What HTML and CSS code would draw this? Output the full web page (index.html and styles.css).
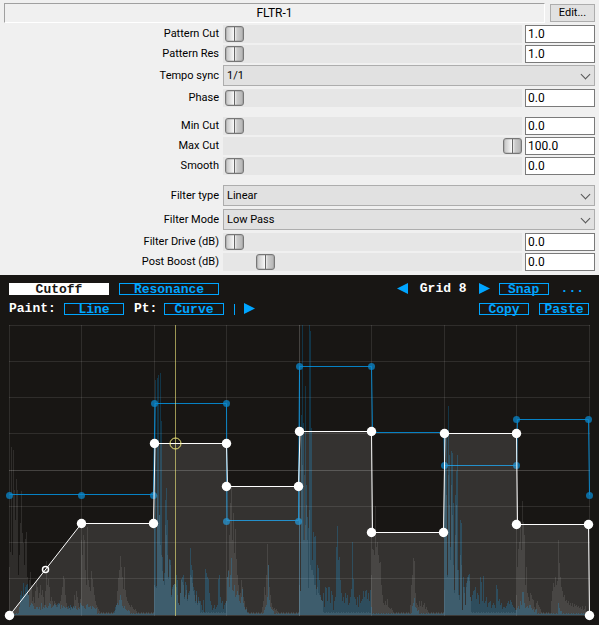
FILE: index.html
```
<!DOCTYPE html>
<html lang="en">
<head>
<meta charset="utf-8">
<title>FLTR-1</title>
<link rel="stylesheet" href="styles.css">
</head>
<body>
<form class="params">
  <header class="head">
    <h1 class="title">FLTR-1</h1>
    <button type="button" class="edit">Edit...</button>
  </header>
  <section class="group">
    <div class="row"><label for="pc">Pattern Cut</label><input id="pc" type="range" value="0"><input class="num" type="text" value="1.0" aria-label="Pattern Cut value"></div>
    <div class="row"><label for="pr">Pattern Res</label><input id="pr" type="range" value="0"><input class="num" type="text" value="1.0" aria-label="Pattern Res value"></div>
    <div class="row pick"><label for="ts">Tempo sync</label><select id="ts"><option>1/1</option></select></div>
    <div class="row"><label for="ph">Phase</label><input id="ph" type="range" value="0"><input class="num" type="text" value="0.0" aria-label="Phase value"></div>
  </section>
  <section class="group">
    <div class="row"><label for="mi">Min Cut</label><input id="mi" type="range" value="0"><input class="num" type="text" value="0.0" aria-label="Min Cut value"></div>
    <div class="row"><label for="ma">Max Cut</label><input id="ma" type="range" value="100"><input class="num" type="text" value="100.0" aria-label="Max Cut value"></div>
    <div class="row"><label for="sm">Smooth</label><input id="sm" type="range" value="0"><input class="num" type="text" value="0.0" aria-label="Smooth value"></div>
  </section>
  <section class="group">
    <div class="row pick"><label for="ft">Filter type</label><select id="ft"><option>Linear</option></select></div>
    <div class="row pick"><label for="fm">Filter Mode</label><select id="fm"><option>Low Pass</option></select></div>
    <div class="row"><label for="fd">Filter Drive (dB)</label><input id="fd" type="range" value="0"><input class="num" type="text" value="0.0" aria-label="Filter Drive value"></div>
    <div class="row"><label for="pb">Post Boost (dB)</label><input id="pb" type="range" value="11"><input class="num" type="text" value="0.0" aria-label="Post Boost value"></div>
  </section>
</form>
<main class="editor">
  <div class="bar">
    <div class="side tabs">
      <button class="key wide on">Cutoff</button>
      <button class="key wide">Resonance</button>
    </div>
    <div class="side grid-tools">
      <button class="arrow" aria-label="Previous grid"><svg width="11" height="12" viewBox="0 0 11 12"><path d="M11 0V11L0 5.500Z"/></svg></button>
      <span>Grid 8</span>
      <button class="arrow" aria-label="Next grid"><svg width="11" height="12" viewBox="0 0 11 12"><path d="M0 0V11L11 5.500Z"/></svg></button>
      <button class="key small">Snap</button>
      <button class="dots">...</button>
    </div>
  </div>
  <div class="bar">
    <div class="side">
      <span class="name">Paint:</span><button class="key mid">Line</button>
      <span class="name pt">Pt:</span><button class="key mid">Curve</button>
      <i class="rule"></i>
      <button class="arrow" aria-label="Play"><svg width="11" height="12" viewBox="0 0 11 12"><path d="M0 0V11L11 5.500Z"/></svg></button>
    </div>
    <div class="side tabs">
      <button class="key small">Copy</button>
      <button class="key small">Paste</button>
    </div>
  </div>
  <svg class="chart" viewBox="9 325 581 291" role="img" aria-label="Cutoff pattern">
    <path class="grid" d="M9 325.5H590M9 361.5H590M9 397.5H590M9 433.5H590M9 470.5H590M9 506.5H590M9 542.5H590M9 578.5H590M9 615.5H590M9.500 325V616M81.500 325V616M154.500 325V616M226.500 325V616M299.500 325V616M371.500 325V616M444.500 325V616M516.500 325V616M589.500 325V616"/>
    <path class="grid" d="M9 470.5H590M299.500 325V616"/>
    <path id="input" class="wave-in"/>
    <path id="output" class="wave-out"/>
    <g class="res">
      <path d="M9.500 494.5H153.500L155 403.500H226.500L227 520.500H295.500H298.500L299.500 366.500H371.500L372.500 432.500H444L444.500 465.500H516.500L517.500 419.500H588.500L589.500 495"/>
      <g id="resDots"></g>
    </g>
    <path class="fill" d="M9 615.500L81.500 523.500H153.500L154.500 443.500H226.500V486.500H298.500L299.500 431.500H371.500L372.500 532.500H443.500L444.500 433.500H516.500L517.500 524.500H588.500L589.500 615.500Z"/>
    <path class="playhead" d="M175.500 325V616"/>
    <path class="cut" d="M9.500 615.500L81.500 523.500H153.500L155 443.500H226.500L227.500 486.500H298.500L300 431.500H371.500L372.500 532.500H443.500L445 433.500H516.500L517.500 524.500H588.500L589.500 615.500"/>
    <g id="cutDots" class="cut-dots"></g>
    <circle class="handle" cx="45.500" cy="569.500" r="3" stroke-width="1.500"/>
    <circle class="cursor" cx="175.500" cy="443.500" r="5.500"/>
  </svg>
</main>
<script src="chart.js"></script>
</body>
</html>
```
FILE: styles.css
```
* { box-sizing: border-box; }
body {
  margin: 0;
  background: #f0f0f0;
  color: #000;
  font: 12px/16px Roboto, sans-serif;
}
button, input, select { font: inherit; color: inherit; margin: 0; border-radius: 0; }

.params { padding: 3px 4px 4px; }
.head { display: flex; gap: 5px; align-items: center; }
.title {
  flex: 1;
  height: 20px;
  margin: 0;
  border: 1px solid;
  border-color: #a0a0a0 #fff #fff #a0a0a0;
  font: inherit;
  line-height: 18px;
  text-align: center;
}
.edit {
  width: 45px;
  height: 18px;
  padding: 0;
  border: 1px solid #adadad;
  background: #e1e1e1;
  font-size: 11px;
}
.group { display: grid; gap: 2px; padding-top: 2px; }
.group + .group { padding-top: 10px; }
.row {
  display: grid;
  grid-template-columns: 215px minmax(0, 1fr) 70px;
  align-items: center;
  height: 18px;
}
.row label { font-size: 11px; text-align: right; }
.pick {
  position: relative;
  grid-template-columns: 215px minmax(0, 1fr);
  height: 22px;
  align-items: start;
}
.pick label { line-height: 22px; }
.num {
  width: 70px;
  height: 18px;
  padding: 0 2px;
  border: 1px solid #7a7a7a;
  background: #fff;
}
select {
  appearance: none;
  height: 21px;
  margin-left: 4px;
  padding: 0 3px;
  border: 1px solid #adadad;
  background: #e1e1e1;
  font-size: 11px;
}
.pick::after {
  content: "";
  position: absolute;
  right: 6px;
  top: 6px;
  width: 6px;
  height: 6px;
  border: solid #555;
  border-width: 0 1px 1px 0;
  transform: rotate(45deg);
  pointer-events: none;
}
input[type="range"] {
  appearance: none;
  height: 18px;
  margin: 0 3px 0 4px;
  padding: 0 0 0 2px;
  background: #e6e6e6;
}
input[type="range"]::-webkit-slider-thumb {
  appearance: none;
  width: 19px;
  height: 16px;
  border: 1px solid #777;
  border-radius: 3px;
  background: linear-gradient(90deg, #c4c4c4, #f2f2f2 7px, #fff 8px, #666 8px 9px, #eee 9px, #ccc 11px, #b4b4b4);
  box-shadow: inset 0 0 0 1px rgba(120, 120, 120, .25);
}

.editor {
  display: grid;
  gap: 8px;
  padding: 8px 9px 9px;
  background: #181614;
  color: #fff;
  font: bold 13px/12px "Liberation Mono", monospace;
}
.bar { display: flex; justify-content: space-between; height: 12px; padding-right: 1px; }
.bar + .chart { margin-top: 2px; }
.side { display: flex; align-items: center; }
.tabs { gap: 10px; }
.key {
  height: 12px;
  padding: 2px 0 0;
  border: 1px solid #00a5ff;
  background: none;
  color: #00a5ff;
  line-height: 8px;
}
.wide { width: 100px; }
.mid { width: 60px; }
.small { width: 50px; }
.on { border-color: #fff; background: #fff; color: #181614; }
.arrow { display: flex; padding: 0; border: 0; background: none; }
.arrow path { fill: #00a5ff; }
.grid-tools { gap: 12px; }
.grid-tools .small { margin-left: -3px; }
.dots { padding: 0 5px 0 0; border: 0; background: none; color: #00a5ff; line-height: 12px; }
.name { width: 55px; }
.pt { width: 30px; margin-left: 10px; }
.rule { width: 1px; height: 11px; margin: 0 9px 0 10px; background: #00a5ff; }

.chart { display: block; width: 100%; overflow: visible; }
.grid { fill: none; stroke: #fff; stroke-opacity: .1; }
.wave-in { fill: #fff; fill-opacity: .1; shape-rendering: crispEdges; }
.wave-out { fill: #00a5ff; fill-opacity: .22; shape-rendering: crispEdges; }
.fill { fill: #fff; fill-opacity: .12; }
.res path { fill: none; stroke: #00a5ff; stroke-opacity: .75; }
.res circle { fill: #0a87cc; fill-opacity: .75; }
.playhead { stroke: #f5ec7d; stroke-opacity: .6; }
.cut { fill: none; stroke: #fff; }
.cut-dots circle { fill: #fff; }
.handle { fill: none; stroke: #fff; }
.cursor { fill: none; stroke: #f5ec7d; }
```
FILE: chart.js
```
// Bar heights by start column; unlisted columns hold the quiet tail.
const input = {
  9: "48 63 168 60 165 125 95 136 125 40 60 92 124 82 72 50 76 83 38 20 35 43 30 14 18 12 24 35 28 17 22 30 20 25 18 10 24 54 30 36 28 14 18 14 10 14 12 10 8 10 12 14 20 28 39 36 20 12 8 6 7 5 8 6 8 20 15 24 18 12 8 16 75 60 80 75 45 30 88 35 28 24 44 36 28 20 14 10 8 6 4",
  115: "5 10 24 37 45 59 48 38 26 48 25 18 14 12 10 8 10 8 6 5 6 4",
  154: "30 28 27 120 90 100 70 60 44 34 30 90 80 60 36 55 50 18 26 30 31 30 28 20 12 10 22 35 33 30 16 20 25 14 20 20 40 38 32 24 20 12 20 10 14 12",
  226: "14 38 45 80 112 130 75 102 62 86 56 40 30 20 22 35 28 18 14 6 8",
  262: "8 14 28 20 40 71 50 28 20 12 8 6 7 5 6 4",
  299: "30 24 180 150 75 140 90 110 75 27 105 50 45 45 40 30 30 20 28 22 20 18 15 14",
  371: "40 66 65 60 109 68 73 60 52 53 30 20 12 10 14 10 16 8 7 6 7 5",
  410: "10 30 40 57 54 22 12 10 8 14 9 14 8 10 12 6 8 5",
  444: "25 150 120 38 140 110 55 130 100 50 22 80 110 45 20 15 60 50 5 28 22 10 28 34 38 34 18",
  516: "20 48 66 73 90 65 114 93 80 30 48 22 18 14 22 20 16 15 8 6 12 14 10 8 6",
  551: "14 24 32 28 38 30 34 75 52 38 28 24 18 20 14 15 12 14 10 12 9 12 8 11 9 10 8 9 7 8 6 9 5 6 9 4"
};
const output = {
  19: "8 20 24 19 32 21 28 30 31 20 8 10 12 11 9 6 6 8 8 6 8 5 12 6 8 7 10 8 7 9 12 11 7 8 9 11 10 8 11 12 11 6 10 7 9 8 7 8 6 9 7 10 8 7 9 7 9 6 5 7 6 12 10 9 9 7 6 10 11 8 8 9 6 9 8 7 6 7",
  114: "4 8 10 12 10 15 20 15 9 7 9 6 5 4 5 4",
  154: "95 235 29 237 240 100 242 194 58 34 42 115 127 95 38 56 55 20 28 30 31 31 40 35 12 10 22 36 38 40 18 33 30 16 22 24 67 50 45 28 25 14 24 12 18 14 14 10 5 15 3 46 42 38 36 22 14 10 5 7 10 6 8 10 36 40 18 12 14 6 10 12 14 38 44 28 40 57 25 24 30 18 20 24 20 14 12 18 26 12 8 5 6 3",
  264: "5 8 10 18 50 15 8 6 5 4",
  299: "240 24 200 290 192 75 229 130 98 87 290 284 187 55 83 78 79 26 50 47 35 20 15 14 22 8 28 27 14 28 28 12 24 20 5 14 18 68 89 55 58 35 22 14 18 12 22 17 20 10 12 18 26 73 36 18 16 10 18 8 20 12 14 16 24 18 24 25 16 22 14 25 8",
  412: "9 12 17 8 7 4 5",
  444: "182 150 182 40 209 160 68 164 162 112 25 120 144 160 45 20 95 92 5 38 28 10 32 38 40 41 18 14 20 24 25 28 16 22 20 11 38 33 14 39 12 14 18 8 12 13 14 7 10 12 10 7 30 26 14 16 10 12 6 8 8 7 9 12 14 11 15 13 10 8 7 5 7",
  516: "5 7 9 6 14 10 23 23 12 7 8 9 7 10 10 7 5 6 3 5 6",
  558: "12 7 4 4"
};
function wave(runs, quiet) {
  const h = Array.from({ length: 580 }, (_, i) => quiet + (i * 7 % 5 > 2 ? 1 : 0));
  for (const [start, run] of Object.entries(runs))
    run.split(" ").forEach((v, i) => { if (+start - 9 + i < 580) h[+start - 9 + i] = +v; });
  return "M9 615" + h.map((v, i) => `V${615 - v}H${10 + i}`).join("") + "V615Z";
}
function dots(id, r, points) {
  document.getElementById(id).innerHTML = points.map(([x, y]) => `<circle cx="${x}" cy="${y}" r="${r}"/>`).join("");
}
document.getElementById("input").setAttribute("d", wave(input, 2));
document.getElementById("output").setAttribute("d", wave(output, 1));
dots("resDots", 3.5, [[9.5,495.5],[81.5,495.5],[153.5,495.5],[154.5,403.5],[226.5,403.5],[226.5,521.5],[298.5,521.5],[299.5,366.5],[371.5,366.5],[444.5,465.5],[516.5,465.5],[516.5,419.5],[588.5,419.5],[589.5,495.5]]);
dots("cutDots", 4.7, [[9.5,615.5],[81.5,523.5],[153.5,523.5],[154.5,443.5],[226.5,443.5],[226.5,486.5],[298.5,486.5],[299.5,431.5],[371.5,431.5],[371.5,532.5],[443.5,532.5],[444.5,433.5],[516.5,433.5],[516.5,524.5],[588.5,524.5],[589.5,615.5]]);
```
